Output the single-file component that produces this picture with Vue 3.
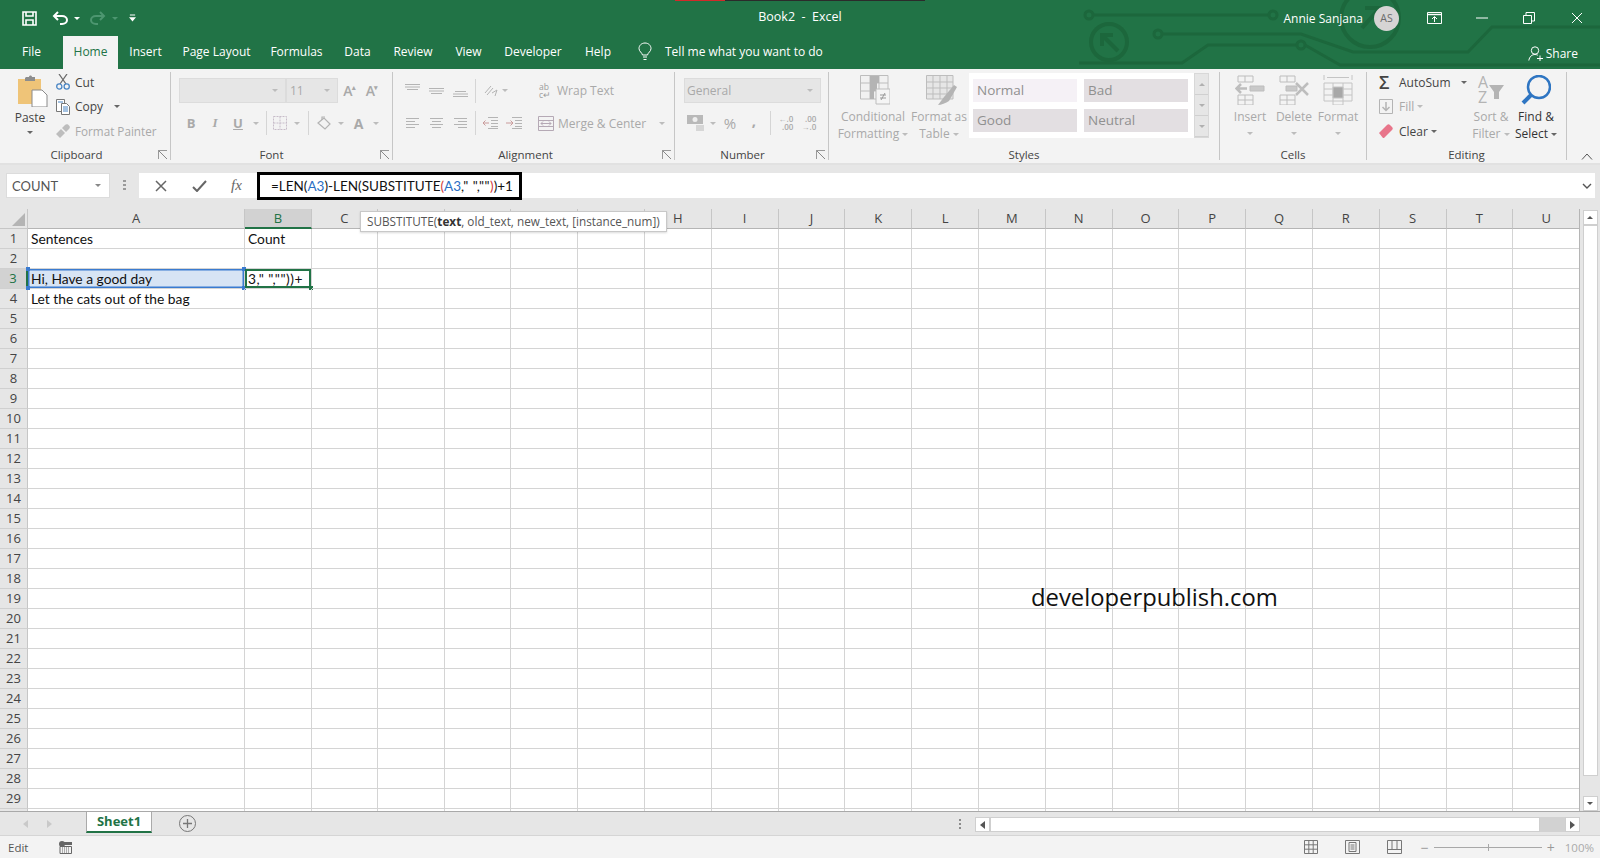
<script setup>
const tabs = [
  { name: 'File', w: 63 },
  { name: 'Home', w: 55, active: true },
  { name: 'Insert', w: 55 },
  { name: 'Page Layout', w: 87 },
  { name: 'Formulas', w: 73 },
  { name: 'Data', w: 49 },
  { name: 'Review', w: 62 },
  { name: 'View', w: 49 },
  { name: 'Developer', w: 80 },
  { name: 'Help', w: 50 }
]

const columns = 'CDEFGHIJKLMNOPQRSTU'.split('')
const rows = Array.from({ length: 30 }, (_, i) => i + 1)

const cellText = {
  A1: 'Sentences',
  B1: 'Count',
  A3: 'Hi, Have a good day',
  B3: '3," ",""))+',
  A4: 'Let the cats out of the bag'
}

const allColumns = ['A', 'B', ...columns]
// headers sitting under the function tooltip
const coveredHeads = ['D', 'E', 'F', 'G']
</script>

<template>
  <div class="app">
    <!-- title bar + tabs -->
    <header class="top">
      <svg class="circuit" width="540" height="69" viewBox="1060 0 540 69" fill="none" stroke="#1c673c" stroke-width="3">
        <circle cx="1089" cy="15" r="4" />
        <path d="M1093 15H1269" />
        <circle cx="1273" cy="15" r="4" />
        <circle cx="1109" cy="42" r="18" stroke-width="4" />
        <path d="M1118 51L1102 35M1102 46V35H1113" stroke-width="4" />
        <circle cx="1158" cy="34" r="4" />
        <path d="M1162 34H1301L1353 52H1468L1492 27H1600" />
        <path d="M1079 63H1182L1208 45H1297" />
        <circle cx="1301" cy="45" r="4" />
        <path d="M1305 45L1340 65H1600" />
        <circle cx="1370" cy="18" r="29" stroke-width="4" />
        <path d="M1362 28L1378 10M1365 8H1380V23" stroke-width="4" />
      </svg>

      <div class="title-row">
        <div class="qat">
          <svg class="q-save" width="15" height="15" viewBox="0 0 15 15" fill="none" stroke="#fff" stroke-width="1.6">
            <path d="M1 1H14V14H1Z" />
            <path d="M4 1V5H11V1" />
            <path d="M4 14V9H11V14" />
          </svg>
          <svg class="q-undo" width="16" height="14" viewBox="0 0 16 14" fill="none" stroke="#fff" stroke-width="2">
            <path d="M6 1L2 5L6 9" />
            <path d="M2 5H10C13 5 15 7 15 9C15 11 13 13 10 13H8" />
          </svg>
          <i class="caret white q-c1"></i>
          <svg class="q-redo" width="16" height="14" viewBox="0 0 16 14" fill="none" stroke="#4d9670" stroke-width="2">
            <path d="M10 1L14 5L10 9" />
            <path d="M14 5H6C3 5 1 7 1 9C1 11 3 13 6 13H8" />
          </svg>
          <i class="caret dim q-c2"></i>
          <svg class="q-more" width="7" height="8" viewBox="0 0 8 8" fill="#fff">
            <path d="M1 0H7V1H1ZM0 3H8L4 8Z" />
          </svg>
        </div>
        <div class="doc-title">Book2&nbsp; - &nbsp;Excel</div>
        <div class="win">
          <span class="user">Annie Sanjana</span>
          <span class="avatar">AS</span>
          <svg class="w-display" width="15" height="12" viewBox="0 0 15 12" fill="none" stroke="#fff">
            <path d="M.5.5H14.5V11.5H.5Z" />
            <path d="M.5 2.5H14.5" stroke-width="1.4" />
            <path d="M7.5 10V5M5 7L7.5 4.5L10 7" />
          </svg>
          <svg class="w-min" width="12" height="2" viewBox="0 0 12 2"><path d="M0 1H12" stroke="#fff" /></svg>
          <svg class="w-restore" width="12" height="12" viewBox="0 0 12 12" fill="none" stroke="#fff">
            <path d="M.5 3.5H8.5V11.5H.5Z" />
            <path d="M3 3.5V.5H11.5V9H8.5" />
          </svg>
          <svg class="w-close" width="12" height="12" viewBox="0 0 12 12" fill="none" stroke="#fff">
            <path d="M1 1L11 11M11 1L1 11" />
          </svg>
        </div>
      </div>

      <nav class="tab-row">
        <span
          v-for="tab in tabs"
          :key="tab.name"
          class="tab"
          :class="{ active: tab.active }"
          :style="{ width: tab.w + 'px' }"
        >{{ tab.name }}</span>
        <svg class="bulb" width="14" height="19" viewBox="0 0 14 19" fill="none" stroke="#fff">
          <path d="M4.5 13C4 10.5 1 9.5 1 6.5C1 3.5 3.5 1 7 1C10.5 1 13 3.5 13 6.5C13 9.5 10 10.5 9.5 13Z" />
          <path d="M5 15H9M5.5 17.5H8.5" />
        </svg>
        <span class="tell">Tell me what you want to do</span>
        <span class="share">
          <svg width="15" height="15" viewBox="0 0 15 15" fill="none" stroke="#fff">
            <circle cx="7" cy="4.5" r="3.7" />
            <path d="M.8 14.5C1.5 10.5 4 8.5 7 8.5C8 8.5 9 8.8 9.8 9.2M9 12.5H15M12 9.5V15" />
          </svg>
          Share
        </span>
      </nav>
    </header>

    <!-- ribbon -->
    <section class="ribbon">
      <!-- Clipboard -->
      <div class="group g-clip">
        <div class="g-body clip-body">
          <div class="paste">
            <svg width="30" height="32" viewBox="0 0 30 32">
              <path d="M0 4H23V29H0Z" fill="#efc478" />
              <path d="M8 2H11C11 0 14 0 14 2H17V6H7V3Z" fill="#8d8d8d" />
              <path d="M14 15H24L29 20V32H14Z" fill="#fff" stroke="#8a8a8a" />
            </svg>
            <span>Paste</span>
            <i class="caret"></i>
          </div>
          <div class="clip-list">
            <div class="clip-item">
              <svg width="14" height="16" viewBox="0 0 14 16" fill="none">
                <path d="M3 0L10 10M11 0L4 10" stroke="#6b6b6b" stroke-width="1.3" />
                <circle cx="3.3" cy="12.5" r="2.6" stroke="#4a86c5" stroke-width="1.3" />
                <circle cx="10.7" cy="12.5" r="2.6" stroke="#4a86c5" stroke-width="1.3" />
              </svg>
              <span>Cut</span>
            </div>
            <div class="clip-item">
              <svg width="14" height="16" viewBox="0 0 14 16" fill="#fff" stroke="#777">
                <path d="M.5.5H8.5V12.5H.5Z" />
                <path d="M5.5 4.5H10.5L13.5 7.5V15.5H5.5Z" />
                <path d="M7 8H12M7 10H12M7 12H12M2 3H7" stroke="#4a86c5" />
              </svg>
              <span>Copy</span>
              <i class="caret copy-caret"></i>
            </div>
            <div class="clip-item off">
              <svg width="14" height="14" viewBox="0 0 14 14" fill="#bdbdbd">
                <path d="M0 10L5 5L9 9L4 14ZM6 4L9 1C10 0 11 0 12 .5L13.5 2C14 3 14 4 13 5L10 8Z" />
              </svg>
              <span class="painter">Format Painter</span>
            </div>
          </div>
        </div>
        <div class="g-label">Clipboard<i class="launch"></i></div>
      </div>

      <!-- Font -->
      <div class="group g-font">
        <div class="g-body">
          <div class="font-top">
            <span class="combo font-name"><i class="caret"></i></span>
            <span class="combo font-size"><b>11</b><i class="caret"></i></span>
            <span class="size-a">A<sup>▴</sup></span>
            <span class="size-a">A<sup>▾</sup></span>
          </div>
          <div class="font-bottom">
            <b class="fmt">B</b>
            <em class="fmt">I</em>
            <u class="fmt">U</u>
            <i class="caret soft"></i>
            <i class="vsep"></i>
            <svg width="14" height="14" viewBox="0 0 14 14" fill="none" stroke="#c7bcc9">
              <path d="M.5.5H13.5V13.5H.5ZM7 .5V13.5M.5 7H13.5" stroke-dasharray="2 1" />
            </svg>
            <i class="caret soft"></i>
            <i class="vsep"></i>
            <svg width="15" height="14" viewBox="0 0 15 14" fill="none" stroke="#b3b3b3" stroke-width="1.2">
              <path d="M1 7L7 2L13 8L8 13Z" />
              <path d="M5 4V1H8" />
            </svg>
            <i class="caret soft"></i>
            <span class="fmt big-a">A</span>
            <i class="caret soft"></i>
          </div>
        </div>
        <div class="g-label">Font<i class="launch"></i></div>
      </div>

      <!-- Alignment -->
      <div class="group g-align">
        <div class="g-body">
          <div class="align-row">
            <svg width="15" height="6" viewBox="0 0 15 6" class="lift"><path d="M0 .5H15M0 3H15M2 5.5H13" stroke="#b4b4b4" /></svg>
            <svg width="15" height="6" viewBox="0 0 15 6"><path d="M0 .5H15M0 3H15M2 5.5H13" stroke="#b4b4b4" /></svg>
            <svg width="15" height="6" viewBox="0 0 15 6" class="drop"><path d="M2 .5H13M0 3H15M0 5.5H15" stroke="#b4b4b4" /></svg>
            <i class="vsep"></i>
            <svg width="15" height="14" viewBox="0 0 15 14" fill="none" stroke="#b4b4b4"><path d="M2 9L8 2M4 11L10 4M9 9L14 6L12 12" /></svg>
            <i class="caret soft"></i>
            <i></i>
            <span class="wrap-item">
              <span class="wrap-ab">ab<br />c↵</span>
              Wrap Text
            </span>
          </div>
          <div class="align-row">
            <svg width="13" height="10" viewBox="0 0 13 10"><path d="M0 .5H13M0 3.5H9M0 6.5H13M0 9.5H9" stroke="#b4b4b4" /></svg>
            <svg width="13" height="10" viewBox="0 0 13 10"><path d="M0 .5H13M2 3.5H11M0 6.5H13M2 9.5H11" stroke="#b4b4b4" /></svg>
            <svg width="13" height="10" viewBox="0 0 13 10"><path d="M0 .5H13M4 3.5H13M0 6.5H13M4 9.5H13" stroke="#b4b4b4" /></svg>
            <i class="vsep"></i>
            <svg width="16" height="12" viewBox="0 0 16 12" fill="none" stroke="#b4b4b4"><path d="M6 .5H16M9 3.5H16M9 6.5H16M9 9.5H16M6 11.5H16" /><path d="M7 6H1M3.5 3.5L1 6L3.5 8.5" stroke="#c99a9a" /></svg>
            <svg width="16" height="12" viewBox="0 0 16 12" fill="none" stroke="#b4b4b4"><path d="M6 .5H16M9 3.5H16M9 6.5H16M9 9.5H16M6 11.5H16" /><path d="M0 6H7M4.5 3.5L7 6L4.5 8.5" stroke="#c99a9a" /></svg>
            <i></i>
            <span class="wrap-item">
              <svg width="16" height="15" viewBox="0 0 16 15" fill="none" stroke="#b5a9b5"><path d="M.5.5H15.5V14.5H.5ZM.5 4.5H15.5M.5 10.5H15.5" /><path d="M3 7.5H13M5 5.5L3 7.5L5 9.5M11 5.5L13 7.5L11 9.5" /></svg>
              Merge &amp; Center
            </span>
            <i class="caret soft merge-caret"></i>
          </div>
        </div>
        <div class="g-label">Alignment<i class="launch"></i></div>
      </div>

      <!-- Number -->
      <div class="group g-number">
        <div class="g-body">
          <span class="combo number-combo">General<i class="caret"></i></span>
          <div class="number-row">
            <svg width="17" height="16" viewBox="0 0 17 16" fill="#b9b9b9"><path d="M0 0H16V9H0Z" /><circle cx="8" cy="4.5" r="2.5" fill="#eee" /><path d="M9 10H17V16H9Z" fill="#d6d6d6" /></svg>
            <i class="caret soft"></i>
            <span class="pct">%</span>
            <span class="comma">,</span>
            <i class="vsep"></i>
            <span class="dec"><span>←.0</span><span>.00</span></span>
            <span class="dec"><span>.00</span><span>→.0</span></span>
          </div>
        </div>
        <div class="g-label">Number<i class="launch"></i></div>
      </div>

      <!-- Styles -->
      <div class="group g-styles">
        <div class="g-body styles-body">
          <div class="big-btn cond off">
            <svg width="30" height="30" viewBox="0 0 30 30" fill="#f1f1f1" stroke="#bdbdbd">
              <path d="M.5.5H28V24H.5ZM.5 8H28M.5 16H28M10 .5V24M19 .5V24" />
              <path d="M10 1H19V8H10ZM10 8H17V16H10ZM10 16H14V24H10Z" fill="#b4b4b4" stroke="none" />
              <path d="M16 14H30V29H16Z" fill="#f5f5f5" />
              <path d="M20 20H26M20 23H26M25 18L21 25" stroke="#999" />
            </svg>
            <span>Conditional</span>
            <span>Formatting <i class="caret soft"></i></span>
          </div>
          <div class="big-btn tbl off">
            <svg width="32" height="30" viewBox="0 0 32 30" fill="#e6e6e6" stroke="#bdbdbd">
              <path d="M.5.5H27V24H.5ZM.5 7H27M.5 13H27M.5 19H27M7 .5V24M14 .5V24M21 .5V24" />
              <path d="M12 30L18 22L28 10L31 12L23 26C20 28 15 30 12 30Z" fill="#b4b4b4" stroke="none" />
            </svg>
            <span>Format as</span>
            <span>Table <i class="caret soft"></i></span>
          </div>
          <div class="gallery">
            <span class="st normal">Normal</span>
            <span class="st bad">Bad</span>
            <span class="st good">Good</span>
            <span class="st neutral">Neutral</span>
          </div>
          <div class="gal-btns">
            <span><i class="caret up"></i></span>
            <span><i class="caret"></i></span>
            <span><i class="caret ruled"></i></span>
          </div>
        </div>
        <div class="g-label">Styles</div>
      </div>

      <!-- Cells -->
      <div class="group g-cells">
        <div class="g-body cells-body">
          <div class="big-btn off">
            <svg width="30" height="30" viewBox="0 0 30 30" fill="none" stroke="#bdbdbd">
              <path d="M3 1H18V7H3ZM10 1V7M3 20H18V30H3ZM3 25H18M10 20V30" />
              <path d="M15 11H29V16H15Z" fill="#c9c9c9" />
              <path d="M12 13.5H2M6 9L1.5 13.5L6 18" stroke-width="2.5" />
            </svg>
            <span>Insert</span>
            <i class="caret"></i>
          </div>
          <div class="big-btn off">
            <svg width="30" height="30" viewBox="0 0 30 30" fill="none" stroke="#bdbdbd">
              <path d="M1 1H16V7H1ZM8 1V7M1 20H16V30H1ZM1 25H16M8 20V30" />
              <path d="M7 11H18V16H7Z" fill="#c9c9c9" />
              <path d="M17 8L29 20M29 8L17 20" stroke-width="2.5" />
            </svg>
            <span>Delete</span>
            <i class="caret"></i>
          </div>
          <div class="big-btn off">
            <svg width="30" height="30" viewBox="0 0 30 30" fill="none" stroke="#c4c4c4">
              <path d="M1 0V5M29 0V5M4 2.5H26M1 8H29V26H1ZM1 14H29M1 20H29M10 8V26M20 8V26M10 26V30H20V26" />
              <path d="M10 12H20V23H10Z" fill="#a8a8a8" />
            </svg>
            <span>Format</span>
            <i class="caret"></i>
          </div>
        </div>
        <div class="g-label">Cells</div>
      </div>

      <!-- Editing -->
      <div class="group g-edit">
        <div class="g-body edit-body">
          <div class="edit-list">
            <div class="edit-item">
              <span class="sigma">Σ</span><span>AutoSum</span><i class="caret sum-caret"></i>
            </div>
            <div class="edit-item off">
              <svg width="14" height="15" viewBox="0 0 14 15" fill="none" stroke="#b4b4b4"><path d="M.5.5H13.5V14.5H.5Z" /><path d="M7 3V11M3.5 8L7 11.5L10.5 8" stroke-width="1.5" /></svg>
              <span>Fill</span><i class="caret soft tight"></i>
            </div>
            <div class="edit-item">
              <svg width="14" height="14" viewBox="0 0 14 14" fill="#e8758a"><path d="M0 9L8 1C9 0 10 0 11 1L13 3C14 4 14 5 13 6L5 14H4Z" /></svg>
              <span>Clear</span><i class="caret tight"></i>
            </div>
          </div>
          <div class="big-btn off sort">
            <div class="sort-icon">
              <span class="az">A<br />Z</span>
              <svg width="15" height="15" viewBox="0 0 15 15"><path d="M0 0H15L10 7V14H5V7Z" fill="#b4b4b4" /></svg>
            </div>
            <span>Sort &amp;</span>
            <span>Filter <i class="caret soft"></i></span>
          </div>
          <div class="big-btn find">
            <svg width="30" height="30" viewBox="0 0 30 30" fill="none">
              <circle cx="18" cy="12" r="11" stroke="#2e75c2" stroke-width="2.5" />
              <path d="M10 20L2 28" stroke="#2e75c2" stroke-width="4" />
            </svg>
            <span>Find &amp;</span>
            <span>Select <i class="caret"></i></span>
          </div>
        </div>
        <div class="g-label">Editing</div>
      </div>

      <svg class="collapse" width="12" height="7" viewBox="0 0 12 7" fill="none" stroke="#555"><path d="M1 6.5L6 1L11 6.5" /></svg>
    </section>

    <!-- formula bar -->
    <section class="fbar">
      <div class="name-box">COUNT<i class="caret"></i></div>
      <div class="fbar-dots"></div>
      <div class="f-input">
        <div class="f-btns">
          <svg width="12" height="12" viewBox="0 0 12 12" fill="none" stroke="#666" stroke-width="1.5"><path d="M1 1L11 11M11 1L1 11" /></svg>
          <svg width="15" height="12" viewBox="0 0 15 12" fill="none" stroke="#666" stroke-width="2"><path d="M1 7L5 11L14 1" /></svg>
          <span class="fx">fx</span>
        </div>
        <div class="f-text">=LEN(<span class="ref">A3</span>)-LEN(SUBSTITUTE<span class="paren">(</span><span class="ref">A3</span><span class="quotes">," ",""</span><span class="paren">)</span>)+1</div>
        <svg class="f-more" width="10" height="6" viewBox="0 0 10 6" fill="none" stroke="#555" stroke-width="1.4"><path d="M1 1L5 5L9 1" /></svg>
      </div>
    </section>

    <!-- worksheet -->
    <section class="work">
      <div class="sheet">
        <div class="grid">
          <div class="corner"><i></i></div>
          <div
            v-for="col in allColumns"
            :key="col"
            class="col-head"
            :class="{ picked: col === 'B' }"
          >{{ coveredHeads.includes(col) ? '' : col }}</div>
          <template v-for="row in rows" :key="row">
            <div class="row-head" :class="{ picked: row === 3 }">{{ row < 30 ? row : '' }}</div>
            <div
              v-for="col in allColumns"
              :key="col + row"
              class="cell"
              :class="{ 'ref-cell': col + row === 'A3', 'edit-cell': col + row === 'B3' }"
            >
              {{ cellText[col + row] }}
              <template v-if="col + row === 'A3'">
                <i class="hd tl"></i><i class="hd tr"></i><i class="hd bl"></i><i class="hd br"></i>
              </template>
              <i v-if="col + row === 'B3'" class="hd green-hd"></i>
            </div>
          </template>
        </div>
        <div class="tip">SUBSTITUTE(<b>text</b>, old_text, new_text, [instance_num])</div>
        <div class="mark">developerpublish.com</div>
      </div>
      <div class="vscroll">
        <span class="sb-btn"><i class="caret up"></i></span>
        <span class="sb-thumb"></span>
        <span class="sb-btn"><i class="caret"></i></span>
      </div>
    </section>

    <!-- sheet tabs -->
    <section class="tabs-bar">
      <span class="nav-tri left"></span>
      <span class="nav-tri right"></span>
      <span class="sheet-tab">Sheet1</span>
      <svg class="add" width="17" height="17" viewBox="0 0 17 17" fill="none" stroke="#777"><circle cx="8.5" cy="8.5" r="8" /><path d="M8.5 4V13M4 8.5H13" stroke-width="1.3" /></svg>
      <span class="grip"></span>
      <div class="hscroll">
        <span class="sb-btn"><i class="tri-l"></i></span>
        <span class="h-thumb"></span>
        <span class="sb-btn"><i class="tri-r"></i></span>
      </div>
    </section>

    <!-- status bar -->
    <footer class="status">
      <span class="st-edit">Edit</span>
      <svg width="13" height="13" viewBox="0 0 13 13" fill="#666"><circle cx="3" cy="3" r="3" /><path d="M5 1H13V4H5Z" /><path d="M1 5.5H12.5V12.5H1Z" fill="#f3f3f3" stroke="#666" /><path d="M3 7H11M3 9H11M3 11H11" stroke="#666" stroke-dasharray="1 1" /></svg>
      <div class="st-right">
        <svg width="14" height="14" viewBox="0 0 14 14" fill="none" stroke="#777"><path d="M.5.5H13.5V13.5H.5ZM.5 4.8H13.5M.5 9.2H13.5M4.8 .5V13.5M9.2 .5V13.5" /></svg>
        <svg width="15" height="14" viewBox="0 0 15 14" fill="none" stroke="#777"><path d="M.5.5H14.5V13.5H.5ZM4 2.5H11V11.5H4ZM5.5 5H9.5M5.5 7H9.5M5.5 9H9.5" /></svg>
        <svg width="15" height="14" viewBox="0 0 15 14" fill="none" stroke="#777"><path d="M.5.5H14.5V13.5H.5ZM.5 9.5H14.5M5 .5V9.5M10 .5V9.5" /></svg>
        <div class="zoomer">
          <span>−</span>
          <i class="slide"><i></i></i>
          <span>+</span>
          <em>100%</em>
        </div>
      </div>
    </footer>
  </div>
</template>

<style>
html,
body {
  margin: 0;
  padding: 0;
  overflow: hidden;
}
</style>

<style scoped>
/* ---------- shell ---------- */
.app {
  width: 1600px;
  height: 858px;
  display: flex;
  flex-direction: column;
  font-family: 'Open Sans', 'Noto Sans', sans-serif;
  font-size: 12px;
  color: #444;
  background: #f3f3f3;
  overflow: hidden;
}

.caret {
  display: inline-block;
  width: 0;
  height: 0;
  border-left: 3px solid transparent;
  border-right: 3px solid transparent;
  border-top: 3px solid #666;
  vertical-align: middle;
}
.caret.up {
  border-top: 0;
  border-bottom: 3px solid #b0b0b0;
}
.caret.white { border-top-color: #fff; }
.caret.dim { border-top-color: #4d9670; }
.caret.soft { border-top-color: #bcbcbc; }

/* ---------- title bar ---------- */
.top {
  position: relative;
  height: 69px;
  flex: none;
  background: #217346;
  color: #fff;
}
.top::before {
  content: '';
  position: absolute;
  left: 675px;
  top: 0;
  width: 250px;
  height: 1px;
  background: linear-gradient(90deg, #d32a2a 20%, #2b2b2b 20%);
}
.circuit {
  position: absolute;
  right: 0;
  top: 0;
}
.title-row {
  position: relative;
  height: 36px;
  display: grid;
  grid-template-columns: 1fr 400px 1fr;
  align-items: center;
}
.qat {
  display: flex;
  align-items: center;
  padding-left: 22px;
  height: 34px;
}
.q-undo { margin-left: 15px; }
.q-c1 { margin-left: 6px; }
.q-redo { margin-left: 10px; }
.q-c2 { margin-left: 6px; }
.q-more { margin-left: 11px; }
.doc-title {
  text-align: center;
  font-size: 12.5px;
  margin-top: -3px;
}
.win {
  display: flex;
  align-items: center;
  justify-content: flex-end;
  height: 32px;
  padding-right: 17px;
  font-size: 12px;
}
.user { margin-right: 11px; }
.avatar {
  width: 25px;
  height: 25px;
  border-radius: 50%;
  background: #d6d4d4;
  color: #6b6b6b;
  font-size: 10.5px;
  line-height: 25px;
  text-align: center;
}
.w-display { margin-left: 28px; }
.w-min { margin-left: 34px; }
.w-restore { margin-left: 35px; }
.w-close { margin-left: 36px; }

.tab-row {
  position: relative;
  height: 33px;
  display: flex;
  align-items: stretch;
  font-size: 12px;
}
.tab {
  text-align: center;
  line-height: 31px;
  flex: none;
}
.tab.active {
  background: #f3f3f3;
  color: #217346;
}
.bulb {
  margin: 6px 0 0 15px;
}
.tell {
  margin-left: 13px;
  line-height: 31px;
}
.share {
  margin-left: auto;
  margin-right: 22px;
  display: flex;
  align-items: center;
  gap: 3px;
  margin-top: 2px;
}

/* ---------- ribbon ---------- */
.ribbon {
  position: relative;
  height: 91px;
  flex: none;
  display: flex;
  padding-top: 3px;
  background: #f3f3f3;
  border-bottom: 2px solid #e1e1e1;
}
.group {
  flex: none;
  height: 88px;
  display: flex;
  flex-direction: column;
  border-right: 1px solid #c6c6c6;
  box-sizing: border-box;
}
.g-clip { width: 171px; }
.g-font { width: 222px; }
.g-align { width: 282px; }
.g-number { width: 154px; }
.g-styles { width: 391px; }
.g-cells { width: 147px; }
.g-edit { width: 200px; }

.g-body {
  flex: 1;
  min-height: 0;
}
.g-label {
  position: relative;
  height: 18px;
  line-height: 25px;
  text-align: center;
  font-size: 11.5px;
  color: #444;
  flex: none;
  box-sizing: border-box;
}
.g-clip .g-label { padding-right: 17px; }
.g-font .g-label { padding-right: 20px; }
.g-align .g-label { padding-right: 16px; }
.g-number .g-label { padding-right: 18px; }
.launch {
  position: absolute;
  right: 3px;
  top: 8px;
  width: 8px;
  height: 8px;
  border-left: 1px solid #999;
  border-top: 1px solid #999;
  background: linear-gradient(45deg, transparent 45%, #888 45%, #888 55%, transparent 55%);
}

.off { color: #a9a9a9; }
.vsep {
  display: block;
  width: 1px;
  height: 24px;
  background: #d5d5d5;
}

/* clipboard */
.clip-body {
  display: flex;
  padding: 3px 0 0 15px;
}
.paste {
  width: 33px;
  display: flex;
  flex-direction: column;
  align-items: flex-end;
  line-height: 17px;
}
.paste span {
  align-self: flex-start;
  width: 30px;
  display: flex;
  justify-content: center;
  margin-top: 2px;
}
.paste .caret {
  align-self: flex-start;
  margin: 5px 0 0 12px;
}
.clip-list {
  margin-left: 8px;
  margin-top: -1px;
  display: flex;
  flex-direction: column;
  gap: 8.5px;
}
.clip-item {
  display: flex;
  align-items: center;
  gap: 5px;
  height: 16px;
}
.copy-caret { margin-left: 6px; }
.painter { font-size: 11.7px; }

/* font */
.g-font .g-body { padding: 6px 0 0 8px; }
.font-top {
  display: grid;
  grid-template-columns: 107px 52px 23px 22px;
  height: 25px;
  align-items: center;
  justify-items: center;
}
.combo {
  display: flex;
  align-items: center;
  justify-content: flex-end;
  box-sizing: border-box;
  height: 25px;
  background: #e6e6e6;
  border: 1px solid #dcdcdc;
  color: #a9a9a9;
  padding: 0 7px;
}
.combo .caret { border-top-color: #bcbcbc; }
.font-name,
.font-size { width: 100%; }
.font-size b {
  font-weight: 400;
  margin-right: auto;
  margin-left: -4px;
}
.size-a {
  color: #a9a9a9;
  font-size: 14px;
  font-weight: 600;
}
.size-a sup {
  font-size: 7px;
  margin-left: -1px;
}
.font-bottom {
  display: grid;
  grid-template-columns: 24px 24px 22px 13px 8px 20px 13px 10px 22px 12px 23px 12px;
  height: 28px;
  margin-top: 6px;
  align-items: center;
  justify-items: center;
}
.fmt {
  color: #a9a9a9;
  font-size: 13px;
  font-weight: 700;
  font-family: 'Liberation Serif', serif;
}
u.fmt,
b.fmt { font-family: 'Open Sans', sans-serif; }
.big-a {
  font-family: 'Open Sans', sans-serif;
  font-size: 14px;
}

/* alignment */
.g-align .g-body { padding: 6px 0 0 7px; }
.align-row {
  display: grid;
  grid-template-columns: 24px 24px 24px 6px 24px 6px 31px auto auto;
  justify-content: start;
  height: 25px;
  align-items: center;
  justify-items: center;
}
.align-row + .align-row {
  height: 28px;
  margin-top: 6px;
  grid-template-columns: 24px 24px 24px 6px 24px 24px 12px auto auto;
}
.lift { margin-top: -7px; }
.drop { margin-top: 7px; }
.wrap-item {
  display: flex;
  align-items: center;
  gap: 4px;
  color: #a9a9a9;
  justify-self: start;
  white-space: nowrap;
}
.wrap-ab {
  font-size: 8.5px;
  line-height: 8px;
  width: 14px;
  color: #9c9c9c;
}
.merge-caret { margin-left: 13px; }

/* number */
.g-number .g-body { padding: 6px 0 0 9px; }
.number-combo {
  width: 137px;
  justify-content: space-between;
  padding: 0 7px 0 2px;
}
.number-row {
  display: grid;
  grid-template-columns: 22px 14px 20px 28px 4px 28px 18px;
  height: 28px;
  margin-top: 6px;
  align-items: center;
  justify-items: center;
  color: #a9a9a9;
}
.pct { font-size: 15px; }
.comma {
  font-size: 15px;
  font-weight: 700;
  line-height: 10px;
  margin-top: -6px;
}
.dec {
  display: flex;
  flex-direction: column;
  align-items: flex-end;
  font-size: 8px;
  line-height: 8px;
  font-weight: 600;
}

/* styles */
.styles-body {
  display: flex;
  padding: 1px 0 0 0;
}
.big-btn {
  display: flex;
  flex-direction: column;
  align-items: center;
  line-height: 17px;
  white-space: nowrap;
}
.big-btn svg { margin: 2px 0 3px; }
.cond {
  width: 68px;
  margin-left: 10px;
}
.cond svg { margin-left: 4px; }
.tbl {
  width: 60px;
  margin-left: 2px;
}
.tbl svg { margin-left: 6px; }
.gallery {
  width: 225px;
  height: 65px;
  padding: 6px 5px 6px 4px;
  box-sizing: border-box;
  background: #fff;
  display: grid;
  grid-template-columns: 104px 104px;
  column-gap: 7px;
  row-gap: 7px;
  grid-auto-rows: 23px;
}
.st {
  display: block;
  padding-left: 4px;
  font-size: 13.5px;
  line-height: 23px;
  color: #909090;
}
.normal { background: #f5f1f6; }
.bad,
.good,
.neutral { background: #e3dfe2; }
.gal-btns {
  width: 15px;
  height: 65px;
  display: flex;
  flex-direction: column;
  background: #e6e6e6;
  border: 1px solid #d8d8d8;
  box-sizing: border-box;
}
.gal-btns span {
  flex: 1;
  display: flex;
  align-items: center;
  justify-content: center;
  border-bottom: 1px solid #d0d0d0;
}
.gal-btns .caret { border-top-color: #b0b0b0; }
.gal-btns .ruled { box-shadow: 0 -3px 0 -2px #b0b0b0; }

/* cells */
.cells-body {
  display: grid;
  grid-template-columns: 44px 44px 44px;
  padding: 1px 0 0 8px;
}
.cells-body .caret {
  margin-top: 7px;
  border-top-color: #bcbcbc;
}

/* editing */
.edit-body {
  display: flex;
  padding: 1px 0 0 12px;
}
.edit-list {
  width: 90px;
  display: flex;
  flex-direction: column;
  gap: 8.5px;
  margin-top: 1px;
}
.edit-item {
  display: flex;
  align-items: center;
  gap: 6px;
  height: 16px;
}
.sigma {
  width: 14px;
  font-size: 18px;
  line-height: 16px;
  color: #444;
  font-weight: 600;
}
.sum-caret { margin-left: 4px; }
.tight { margin-left: -3px; }
.sort { width: 44px; }
.sort-icon {
  display: flex;
  align-items: flex-end;
  height: 30px;
  margin: 2px 0 3px;
  gap: 1px;
}
.sort-icon svg { margin: 0 0 5px; }
.az {
  font-size: 16px;
  line-height: 15px;
  color: #b4b4b4;
}
.find {
  width: 46px;
  color: #333;
}
.collapse {
  position: absolute;
  right: 7px;
  top: 84px;
}

/* ---------- formula bar ---------- */
.fbar {
  height: 44px;
  flex: none;
  box-sizing: border-box;
  padding: 8px 5px 0 6px;
  display: flex;
  align-items: flex-start;
  background: #e6e6e6;
}
.name-box {
  width: 104px;
  height: 25px;
  box-sizing: border-box;
  background: #fff;
  display: flex;
  align-items: center;
  justify-content: space-between;
  padding: 0 8px 0 5px;
  font-size: 13px;
  color: #555;
  font-family: 'Lato', sans-serif;
  border: 1px solid #dcdcdc;
}
.name-box .caret { border-top-color: #888; }
.fbar-dots {
  width: 3px;
  height: 11px;
  margin: 7px 13px 0 13px;
  background: repeating-linear-gradient(180deg, #9a9a9a 0 2px, transparent 2px 4px);
  flex: none;
}
.f-input {
  flex: 1;
  height: 25px;
  background: #fff;
  display: flex;
  align-items: center;
}
.f-btns {
  width: 115px;
  height: 25px;
  padding-left: 3px;
  display: grid;
  grid-template-columns: 38px 38px 37px;
  align-items: center;
  justify-items: center;
  flex: none;
}
.fx {
  font-family: 'Liberation Serif', serif;
  font-style: italic;
  font-size: 15px;
  color: #666;
}
.f-text {
  width: 265px;
  height: 28px;
  box-sizing: border-box;
  border: 3px solid #000;
  padding-left: 11px;
  line-height: 22px;
  font-family: 'Lato', sans-serif;
  font-size: 13.5px;
  color: #111;
  background: #fff;
  white-space: pre;
}
.ref { color: #2a6fc4; }
.paren { color: #d23a3a; }
.quotes { letter-spacing: 0.5px; }
.f-more {
  margin-left: auto;
  margin-right: 3px;
}

/* ---------- worksheet ---------- */
.work {
  flex: 1;
  min-height: 0;
  display: flex;
  background: #fff;
  border-bottom: 1px solid #a9a9a9;
}
.sheet {
  position: relative;
  width: 1579px;
  overflow: hidden;
}
.grid {
  display: grid;
  grid-template-columns: 28px 217px 67px 65.8px repeat(18, 66.8px);
  grid-template-rows: 20px repeat(30, 20px);
  font-family: 'Lato', sans-serif;
  font-size: 13.8px;
  color: #111;
}
.corner {
  background: #e6e6e6;
  border-right: 1px solid #c6c6c6;
  border-bottom: 1px solid #c6c6c6;
  display: flex;
  align-items: flex-end;
  justify-content: flex-end;
  box-sizing: border-box;
}
.corner i {
  width: 0;
  height: 0;
  border-left: 13px solid transparent;
  border-bottom: 13px solid #b4b4b4;
  margin: 0 2px 2px 0;
}
.col-head {
  background: #e6e6e6;
  border-right: 1px solid #c6c6c6;
  border-bottom: 1px solid #b5b5b5;
  box-sizing: border-box;
  text-align: center;
  line-height: 19px;
  font-family: 'Open Sans', sans-serif;
  font-size: 13px;
  color: #444;
}
.col-head.picked {
  background: #d2d2d2;
  color: #217346;
  border-bottom: 2px solid #217346;
}
.row-head {
  background: #e6e6e6;
  border-right: 1px solid #c6c6c6;
  border-bottom: 1px solid #d0d0d0;
  box-sizing: border-box;
  text-align: center;
  line-height: 19px;
  font-family: 'Open Sans', sans-serif;
  font-size: 13px;
  color: #444;
}
.row-head.picked {
  background: #d2d2d2;
  color: #217346;
  border-right: 2px solid #217346;
}
.cell {
  position: relative;
  border-right: 1px solid #d4d4d4;
  border-bottom: 1px solid #d4d4d4;
  box-sizing: border-box;
  padding-left: 3px;
  line-height: 20px;
  white-space: nowrap;
}
.ref-cell {
  background: #d7e4f4;
  box-shadow: inset 0 0 0 1.5px #3a7bd0;
}
.edit-cell {
  box-shadow: inset 0 0 0 2px #217346;
  letter-spacing: 0.5px;
}
.hd {
  position: absolute;
  width: 4px;
  height: 4px;
  background: #3a7bd0;
}
.tl { left: -2px; top: -2px; }
.tr { right: -2px; top: -2px; }
.bl { left: -2px; bottom: -2px; }
.br { right: -2px; bottom: -2px; }
.green-hd {
  right: -2px;
  bottom: -2px;
  background: #217346;
}
.tip {
  position: absolute;
  left: 360px;
  top: 2px;
  height: 21px;
  box-sizing: border-box;
  padding: 0 6px;
  line-height: 19px;
  background: #fff;
  border: 1px solid #c8c8c8;
  box-shadow: 0 1px 2px rgba(0, 0, 0, 0.15);
  color: #555;
  font-size: 11.75px;
  white-space: nowrap;
}
.tip b { color: #333; }
.mark {
  position: absolute;
  left: 1031px;
  top: 370px;
  font-size: 23.8px;
  line-height: 36px;
  color: #111;
}

.vscroll {
  width: 21px;
  display: flex;
  flex-direction: column;
  align-items: center;
  background: #e6e6e6;
  border-left: 1px solid #b5b5b5;
  padding: 1px 0 0;
  box-sizing: border-box;
}
.sb-btn {
  width: 15px;
  height: 15px;
  flex: none;
  display: flex;
  align-items: center;
  justify-content: center;
  background: #fff;
  border: 1px solid #cfcfcf;
  box-sizing: border-box;
}
.sb-btn .caret { border-top-color: #555; }
.sb-btn .caret.up { border-bottom-color: #555; }
.sb-thumb {
  width: 15px;
  height: 551px;
  background: #fff;
  border: 1px solid #cfcfcf;
  box-sizing: border-box;
  margin-bottom: auto;
}

/* ---------- sheet tabs ---------- */
.tabs-bar {
  height: 23px;
  flex: none;
  display: flex;
  align-items: flex-start;
  background: #e6e6e6;
  border-bottom: 1px solid #d5d5d5;
  position: relative;
}
.nav-tri {
  width: 0;
  height: 0;
  border-top: 4px solid transparent;
  border-bottom: 4px solid transparent;
  margin-top: 8px;
}
.nav-tri.left {
  border-right: 5px solid #c9c9c9;
  margin-left: 23px;
}
.nav-tri.right {
  border-left: 5px solid #c9c9c9;
  margin-left: 19px;
}
.sheet-tab {
  margin-left: 34px;
  width: 66px;
  height: 21px;
  box-sizing: border-box;
  background: #fff;
  color: #217346;
  font-weight: 700;
  font-size: 13px;
  text-align: center;
  line-height: 18px;
  border-left: 1px solid #aaa;
  border-right: 1px solid #aaa;
  border-bottom: 2px solid #217346;
}
.add { margin: 3px 0 0 27px; }
.grip {
  width: 2px;
  height: 10px;
  margin: 7px 0 0 763px;
  background: repeating-linear-gradient(180deg, #8c8c8c 0 2px, transparent 2px 4px);
}
.hscroll {
  width: 605px;
  height: 15px;
  margin: 5px 0 0 14px;
  display: flex;
  background: #d2d2d2;
}
.h-thumb {
  width: 550px;
  background: #fff;
  border: 1px solid #cfcfcf;
  box-sizing: border-box;
  margin-right: auto;
}
.tri-l,
.tri-r {
  width: 0;
  height: 0;
  border-top: 4px solid transparent;
  border-bottom: 4px solid transparent;
}
.tri-l { border-right: 5px solid #555; }
.tri-r { border-left: 5px solid #555; }

/* ---------- status bar ---------- */
.status {
  height: 22px;
  flex: none;
  display: flex;
  align-items: center;
  background: #f3f3f3;
  padding-left: 8px;
  font-size: 11.5px;
  color: #555;
}
.st-edit { width: 51px; }
.st-right {
  margin-left: auto;
  display: flex;
  align-items: center;
  gap: 27px;
  padding-right: 6px;
}
.zoomer {
  display: flex;
  align-items: center;
  gap: 5px;
  margin-left: -8px;
  color: #999;
}
.zoomer span { font-size: 14px; }
.zoomer em {
  font-style: normal;
  margin-left: 5px;
  color: #aaa;
}
.slide {
  position: relative;
  display: block;
  width: 108px;
  height: 1px;
  background: #a8a8a8;
}
.slide i {
  position: absolute;
  left: 54px;
  top: -3px;
  width: 1px;
  height: 7px;
  background: #a8a8a8;
}
</style>
